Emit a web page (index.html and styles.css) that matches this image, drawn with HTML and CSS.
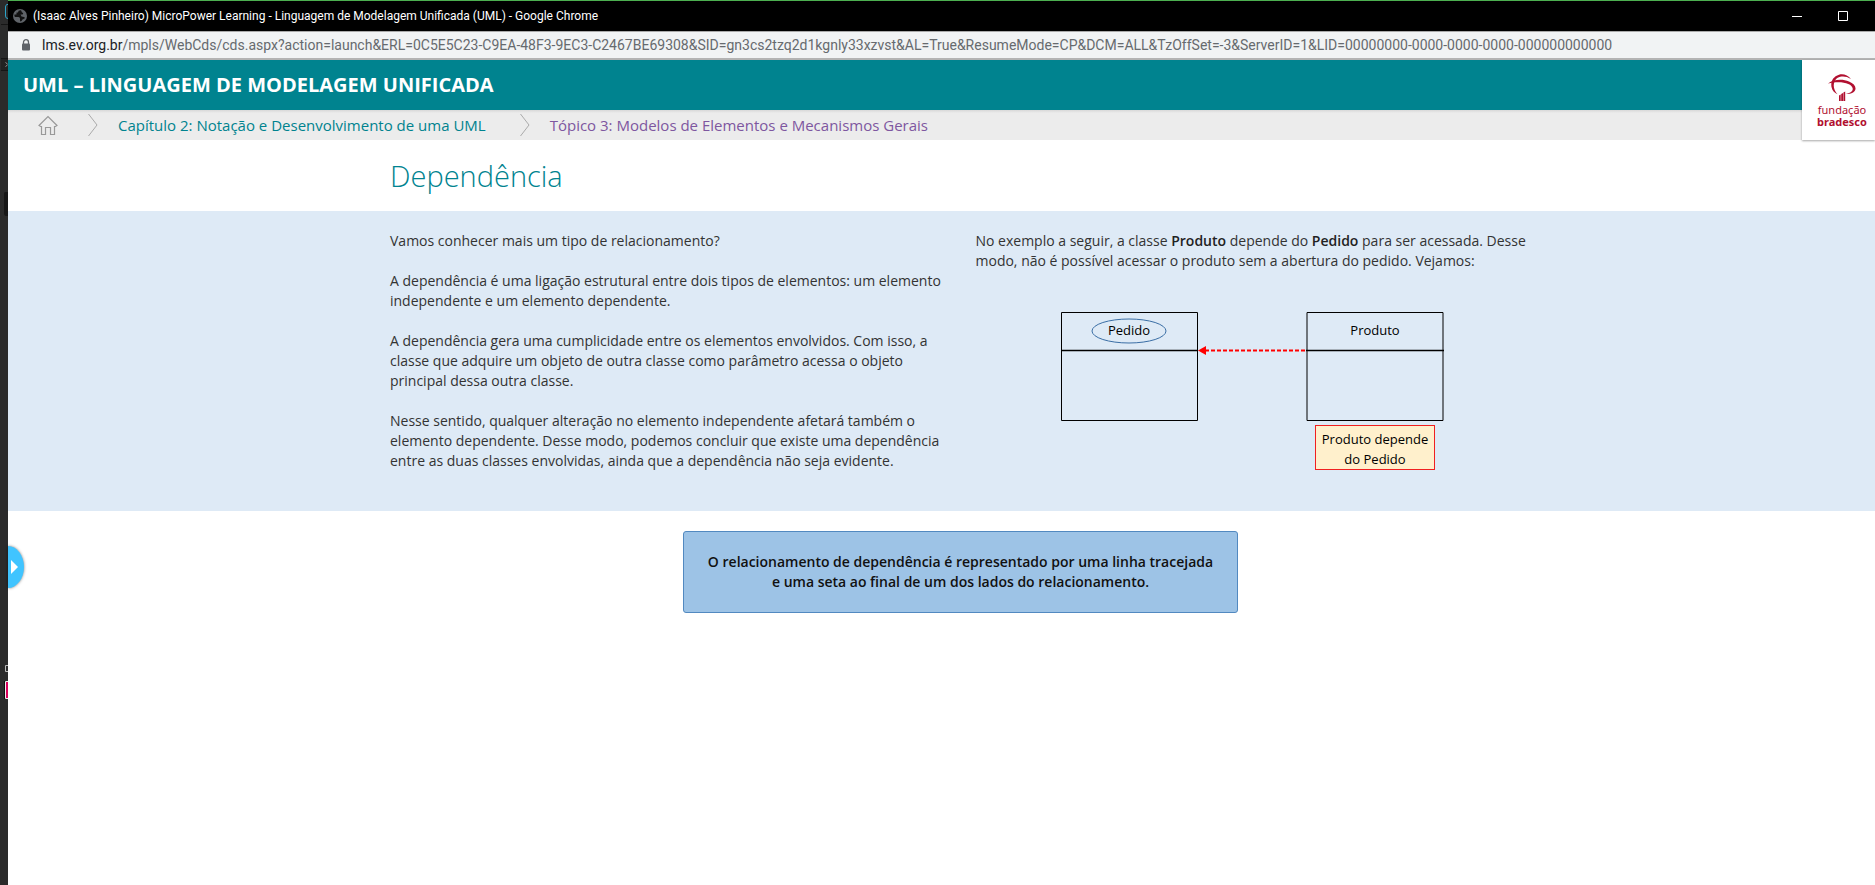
FILE: index.html
```html
<!DOCTYPE html>
<html lang="pt-BR">
<head>
<meta charset="utf-8">
<meta name="viewport" content="width=device-width, initial-scale=1">
<title>MicroPower Learning</title>
<link rel="stylesheet" href="styles.css">
</head>
<body>
<div class="desktop">
  <aside class="backdrop" aria-hidden="true">
    <svg class="backdrop-art" width="8" height="885" viewBox="0 0 8 885">
      <path d="M1 24.500H8M1 58.500H8M1 70.500H8" stroke="#151515"/>
      <path d="M1 59H8V70H1z" fill="#222"/>
      <path d="M8 4.500H7Q5.500 5 5.500 7V16Q5.500 18.500 8 18.500" fill="none" stroke="#2ba3c8"/>
      <path d="M5.500 62.500L7.500 64M5.500 66.500L7.500 65" fill="none" stroke="#999"/>
      <path d="M8 192H5Q4 192 4 194V213Q4 216 6 216H8z" fill="#171717"/>
      <path d="M8 665.500H5.500V671.500H8" fill="none" stroke="#bbb"/>
      <path d="M4 681H8V699H4z" fill="#0d0d0d"/>
      <path d="M6 682H8V698H6z" fill="#d8005b"/>
      <path d="M8 681.500H5.500V698.500H8" fill="none" stroke="#eee"/>
    </svg>
  </aside>
  <div class="window">
    <header class="titlebar">
      <svg width="16" height="16" viewBox="0 0 16 16" aria-hidden="true"><circle cx="8" cy="8" r="7" fill="#5f6368"/><path d="M9 2.200Q6 2 6 4.500H4.500V6.500H2.500Q2 8 3 9H6.500Q8 9 8 10.500V13.500Q10 13.500 10.500 11.500L12.500 10.500Q13.500 9.500 12 9L9.500 8.500 8.500 6.500H10.500Q12 5 10 4.500z" fill="#111"/></svg>
      <span class="window-title">(Isaac Alves Pinheiro) MicroPower Learning - Linguagem de Modelagem Unificada (UML) - Google Chrome</span>
      <div class="window-buttons">
        <button type="button" aria-label="Minimizar"><svg width="10" height="10" viewBox="0 0 10 10"><path d="M0 5.500H10" stroke="#fff"/></svg></button>
        <button type="button" aria-label="Maximizar"><svg width="10" height="10" viewBox="0 0 10 10"><path d="M.5 .5H9.500V9.500H.5z" fill="none" stroke="#fff"/></svg></button>
      </div>
    </header>
    <div class="addressbar">
      <svg width="10" height="12" viewBox="0 0 10 12" aria-hidden="true"><path d="M2.500 5V3.200a2.500 2.500 0 0 1 5 0V5" fill="none" stroke="#5f6368" stroke-width="1.300"/><rect x="1" y="4.500" width="8" height="7" rx="1" fill="#5f6368"/></svg>
      <span class="url"><span class="host">lms.ev.org.br</span>/mpls/WebCds/cds.aspx?action=launch&amp;ERL=0C5E5C23-C9EA-48F3-9EC3-C2467BE69308&amp;SID=gn3cs2tzq2d1kgnly33xzvst&amp;AL=True&amp;ResumeMode=CP&amp;DCM=ALL&amp;TzOffSet=-3&amp;ServerID=1&amp;LID=00000000-0000-0000-0000-000000000000</span>
    </div>
    <div class="course">
      <div class="course-head">
        <div class="course-bars">
          <div class="course-title">UML – LINGUAGEM DE MODELAGEM UNIFICADA</div>
          <nav class="crumbs" aria-label="Navegação">
            <a class="home" href="#" aria-label="Início"><svg width="20" height="21" viewBox="0 0 20 21"><path d="M1 10.500L10 1.500L19 10.500L17.500 11.500H16.500V19.500H12.500V12.500H7.500V19.500H3.500V11.500H2.500z" fill="none" stroke="#999" stroke-width="1.200"/></svg></a>
            <svg class="chevron" width="10" height="22" viewBox="0 0 10 22" aria-hidden="true"><path d="M.5 0L9 11L.5 22" fill="none" stroke="#aaa"/></svg>
            <a class="chapter" href="#">Capítulo 2: Notação e Desenvolvimento de uma UML</a>
            <svg class="chevron" width="10" height="22" viewBox="0 0 10 22" aria-hidden="true"><path d="M.5 0L9 11L.5 22" fill="none" stroke="#aaa"/></svg>
            <a class="topic" href="#">Tópico 3: Modelos de Elementos e Mecanismos Gerais</a>
          </nav>
        </div>
        <div class="brand">
          <svg width="28" height="27" viewBox="0 0 28 27" aria-hidden="true"><g fill="#b11030"><path d="M23 5C20 1 15-.5 11 .7C5 2.500 2.500 7.500 3.500 13C4.200 16.500 6.500 19 9.500 20.300C6 16.500 4.800 12 6.500 7.500C8.500 2.500 16 .5 23 5z"/><path d="M0 9.500C6 5 15 5 21 7.500C26 9.500 28.500 13 27.200 16C26 19 22 20.300 17.500 20C22 19.200 25 17.500 24.700 14.500C24 9 12 6.500 0 9.500z"/><path d="M11 21.500L12.700 20.500V27H11zM13.200 20L15 19V27H13.200zM15.400 18.500L17.200 17.500V27H15.400z"/></g></svg>
          <span class="brand-top">fundação</span>
          <strong class="brand-bottom">bradesco</strong>
        </div>
      </div>
      <main>
        <div class="container"><h1>Dependência</h1></div>
        <section class="lesson">
          <div class="container columns">
            <div class="prose">
              <p>Vamos conhecer mais um tipo de relacionamento?</p>
              <p>A dependência é uma ligação estrutural entre dois tipos de elementos: um elemento independente e um elemento dependente.</p>
              <p>A dependência gera uma cumplicidade entre os elementos envolvidos. Com isso, a classe que adquire um objeto de outra classe como parâmetro acessa o objeto principal dessa outra classe.</p>
              <p>Nesse sentido, qualquer alteração no elemento independente afetará também o elemento dependente. Desse modo, podemos concluir que existe uma dependência entre as duas classes envolvidas, ainda que a dependência não seja evidente.</p>
            </div>
            <div class="example">
              <p>No exemplo a seguir, a classe <strong>Produto</strong> depende do <strong>Pedido</strong> para ser acessada. Desse modo, não é possível acessar o produto sem a abertura do pedido. Vejamos:</p>
              <svg class="diagram" width="384" height="160" viewBox="0 0 384 160" role="img" aria-label="Produto depende do Pedido">
                <g fill="none" stroke="#000"><path d="M.5 .5H136.500V108.500H.5z"/><path d="M246 .5H382V108.500H246z"/><path d="M0 38.500H137M245 38.500H383" stroke-width="1.500"/></g>
                <ellipse cx="68" cy="19" rx="37" ry="12" fill="none" stroke="#3a6ea5"/>
                <path d="M144 38.500H246" stroke="#f00" stroke-width="2" stroke-dasharray="4 2"/>
                <path d="M137 38.500L145 34V43z" fill="#f00"/>
                <rect x="254.500" y="113.500" width="119" height="44" fill="#fff0cc" stroke="#f02020"/>
                <g class="diagram-text"><text x="68" y="23">Pedido</text><text x="314" y="23">Produto</text><text x="314" y="132">Produto depende</text><text x="314" y="152">do Pedido</text></g>
              </svg>
            </div>
          </div>
        </section>
        <div class="container">
          <p class="callout">O relacionamento de dependência é representado por uma linha tracejada e uma seta ao final de um dos lados do relacionamento.</p>
        </div>
      </main>
      <button class="drawer" type="button" aria-label="Abrir menu"><svg width="7" height="14" viewBox="0 0 7 14"><path d="M0 0L7 7L0 14z" fill="#fff"/></svg></button>
    </div>
  </div>
</div>
</body>
</html>
```
FILE: styles.css
```css
* { box-sizing: border-box; }
body { margin: 0; font-family: "Open Sans", sans-serif; font-size: 14px; line-height: 20px; color: #333; background: #fff; }
p, h1 { margin: 0; }
strong { font-weight: 600; color: #222; }
a { text-decoration: none; }
button { border: 0; padding: 0; background: none; }
svg { flex: none; display: block; }
.desktop { display: flex; min-height: 100vh; }
.backdrop { flex: none; width: 8px; background: #2b2b2b; }
.window { flex: 1; min-width: 0; display: flex; flex-direction: column; }
.titlebar { display: flex; align-items: center; gap: 5px; height: 31px; padding: 0 27px 0 4px; border-top: 1px solid #4caf50; background: #000; color: #fff; font-family: Roboto, sans-serif; font-size: 12px; }
.window-title { white-space: nowrap; }
.window-buttons { display: flex; gap: 36px; margin-left: auto; }
.addressbar { display: flex; align-items: center; gap: 11px; height: 29px; padding-left: 13px; border-top: 1px solid #aaa; border-bottom: 2px solid #b3b3b3; background: #f1f3f4; color: #666a6e; font-family: Roboto, sans-serif; font-size: 14px; overflow: hidden; white-space: nowrap; }
.host { color: #202124; }
.course { position: relative; flex: 1; background: #fff; }
.course-head { display: flex; align-items: flex-start; }
.course-bars { flex: 1; min-width: 0; }
.course-title { height: 50px; padding-left: 15px; background: #00838f; color: #fff; font-size: 20px; font-weight: 700; line-height: 50px; white-space: nowrap; }
.crumbs { display: flex; align-items: center; height: 30px; padding-left: 30px; background: linear-gradient(#d8d8d8, #ececec 3px); font-size: 15px; white-space: nowrap; }
.chevron { margin: 0 20px 0 34px; }
.home + .chevron { margin-left: 30px; }
.chapter { color: #00838f; }
.topic { color: #7e57a0; }
.brand { display: flex; flex-direction: column; align-items: center; width: 73px; height: 80px; padding: 14px 0 0 7px; background: #fff; box-shadow: 0 1px 2px rgba(0, 0, 0, .35); color: #b11030; line-height: 12px; }
.brand-top { margin-top: 3px; font-family: "Noto Sans", sans-serif; font-size: 11px; }
.brand-bottom { color: #b11030; font-family: "Noto Sans", sans-serif; font-size: 11px; font-weight: 700; }
.container { max-width: 1209px; margin: 0 auto; padding-left: 38px; }
h1 { padding: 16px 0 15px 15px; color: #00838f; font-size: 29px; font-weight: 300; line-height: 40px; }
.lesson { padding: 20px 0; background: #deeaf6; }
.columns { display: grid; grid-template-columns: 1fr 1fr; }
.prose, .example { padding: 0 15px; }
.prose p { margin-bottom: 20px; }
.diagram { margin: 41px auto 0; }
.diagram-text { font-family: "Open Sans", sans-serif; font-size: 13px; text-anchor: middle; fill: #000; }
.callout { max-width: 555px; margin: 20px auto 0; padding: 20px; border: 1px solid #5289c0; border-radius: 3px; background: #9dc3e6; color: #111; font-weight: 600; text-align: center; }
.drawer { position: absolute; left: 0; top: 486px; width: 16px; height: 42px; padding-left: 3px; border-radius: 0 16px 16px 0 / 0 21px 21px 0; background: #40c4ff; box-shadow: 0 0 3px rgba(0, 0, 0, .5); }
```
